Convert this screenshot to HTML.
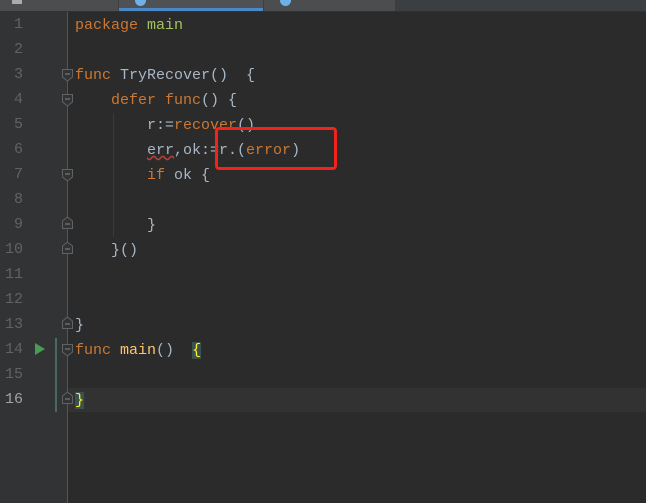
<!DOCTYPE html>
<html><head><meta charset="utf-8"><style>
body{margin:0;width:646px;height:503px;background:#2b2b2b;overflow:hidden;position:relative;font-family:"Liberation Mono",monospace;font-size:15px}
.tabs{position:absolute;left:0;top:0;width:646px;height:11px;background:#3c3f41;border-bottom:1px solid #323232}
.tab{position:absolute;top:0;height:11px;background:#4b4d4e;overflow:hidden}
.gut{position:absolute;left:0;top:12px;width:67px;height:491px;background:#313335}
.sep{position:absolute;left:67px;top:12px;width:1px;height:491px;background:#555}
.ln{position:absolute;left:0;width:23px;text-align:right;color:#606366;font-size:15px}
.code{position:absolute;left:75px;white-space:pre;color:#a9b7c6}
.k{color:#cc7832}.g{color:#a5c261}.y{color:#ffc66d}
.fold{position:absolute;left:61px;width:13px;height:14px}
.hb{background:#3b514d;color:#ffef28}
</style></head><body>
<div class="tabs">
<div class="tab" style="left:0;width:118px"><span style="position:absolute;left:12px;top:-4px;width:10px;height:8px;background:#aaa"></span></div>
<div class="tab" style="left:119px;width:144px;background:#4e5254"><span style="position:absolute;left:16px;top:-5px;width:11px;height:11px;border-radius:50%;background:#6fb0e6"></span><span style="position:absolute;left:0;bottom:0;width:144px;height:3px;background:#4a88c7"></span></div>
<div class="tab" style="left:264px;width:131px"><span style="position:absolute;left:16px;top:-5px;width:11px;height:11px;border-radius:50%;background:#6fb0e6"></span></div>
</div>
<div style="position:absolute;left:68px;top:388px;width:578px;height:24px;background:#323232"></div>
<div class="gut"></div><div class="sep"></div>
<div style="position:absolute;left:113px;top:113px;width:1px;height:124px;background:#3b3b3b"></div>
<div style="position:absolute;left:55px;top:338px;width:2px;height:74px;background:#4a6b5c"></div>
<div style="position:absolute;left:35px;top:343px;width:0;height:0;border-left:10px solid #499c54;border-top:6px solid transparent;border-bottom:6px solid transparent"></div>

<div class="ln" style="top:16px">1</div>
<div class="ln" style="top:41px">2</div>
<div class="ln" style="top:66px">3</div>
<div class="ln" style="top:91px">4</div>
<div class="ln" style="top:116px">5</div>
<div class="ln" style="top:141px">6</div>
<div class="ln" style="top:166px">7</div>
<div class="ln" style="top:191px">8</div>
<div class="ln" style="top:216px">9</div>
<div class="ln" style="top:241px">10</div>
<div class="ln" style="top:266px">11</div>
<div class="ln" style="top:291px">12</div>
<div class="ln" style="top:316px">13</div>
<div class="ln" style="top:341px">14</div>
<div class="ln" style="top:366px">15</div>
<div class="ln" style="top:391px;color:#a4a3a3">16</div>

<svg class="fold" style="top:68px" viewBox="0 0 13 14"><path d="M1.5 1.5H11.5V9L6.5 13L1.5 9Z" fill="#313335" stroke="#5f6366"/><path d="M4 6H9" stroke="#888"/></svg>
<svg class="fold" style="top:93px" viewBox="0 0 13 14"><path d="M1.5 1.5H11.5V9L6.5 13L1.5 9Z" fill="#313335" stroke="#5f6366"/><path d="M4 6H9" stroke="#888"/></svg>
<svg class="fold" style="top:168px" viewBox="0 0 13 14"><path d="M1.5 1.5H11.5V9L6.5 13L1.5 9Z" fill="#313335" stroke="#5f6366"/><path d="M4 6H9" stroke="#888"/></svg>
<svg class="fold" style="top:216px" viewBox="0 0 13 14"><path d="M1.5 12.5H11.5V5L6.5 1L1.5 5Z" fill="#313335" stroke="#5f6366"/><path d="M4 8H9" stroke="#888"/></svg>
<svg class="fold" style="top:241px" viewBox="0 0 13 14"><path d="M1.5 12.5H11.5V5L6.5 1L1.5 5Z" fill="#313335" stroke="#5f6366"/><path d="M4 8H9" stroke="#888"/></svg>
<svg class="fold" style="top:316px" viewBox="0 0 13 14"><path d="M1.5 12.5H11.5V5L6.5 1L1.5 5Z" fill="#313335" stroke="#5f6366"/><path d="M4 8H9" stroke="#888"/></svg>
<svg class="fold" style="top:343px" viewBox="0 0 13 14"><path d="M1.5 1.5H11.5V9L6.5 13L1.5 9Z" fill="#313335" stroke="#5f6366"/><path d="M4 6H9" stroke="#888"/></svg>
<svg class="fold" style="top:391px" viewBox="0 0 13 14"><path d="M1.5 12.5H11.5V5L6.5 1L1.5 5Z" fill="#313335" stroke="#5f6366"/><path d="M4 8H9" stroke="#888"/></svg>

<div class="code" style="top:17px"><span class="k">package</span> <span class="g">main</span></div>
<div class="code" style="top:67px"><span class="k">func</span> TryRecover()  {</div>
<div class="code" style="top:92px">    <span class="k">defer func</span>() {</div>
<div class="code" style="top:117px">        r:=<span class="k">recover</span>()</div>
<div class="code" style="top:142px">        <span style="text-decoration:underline wavy #bc3f3c">err</span>,ok:=r.(<span class="k">error</span>)</div>
<div class="code" style="top:167px">        <span class="k">if</span> ok {</div>
<div class="code" style="top:217px">        }</div>
<div class="code" style="top:242px">    }()</div>
<div class="code" style="top:317px">}</div>
<div class="code" style="top:342px"><span class="k">func</span> <span class="y">main</span>()  <span class="hb">{</span></div>
<div class="code" style="top:389px;line-height:24px"><span class="hb">}</span></div>

<div style="position:absolute;left:215px;top:127px;width:122px;height:43px;border:3px solid #f5221b;border-radius:4px;box-sizing:border-box"></div>
</body></html>
